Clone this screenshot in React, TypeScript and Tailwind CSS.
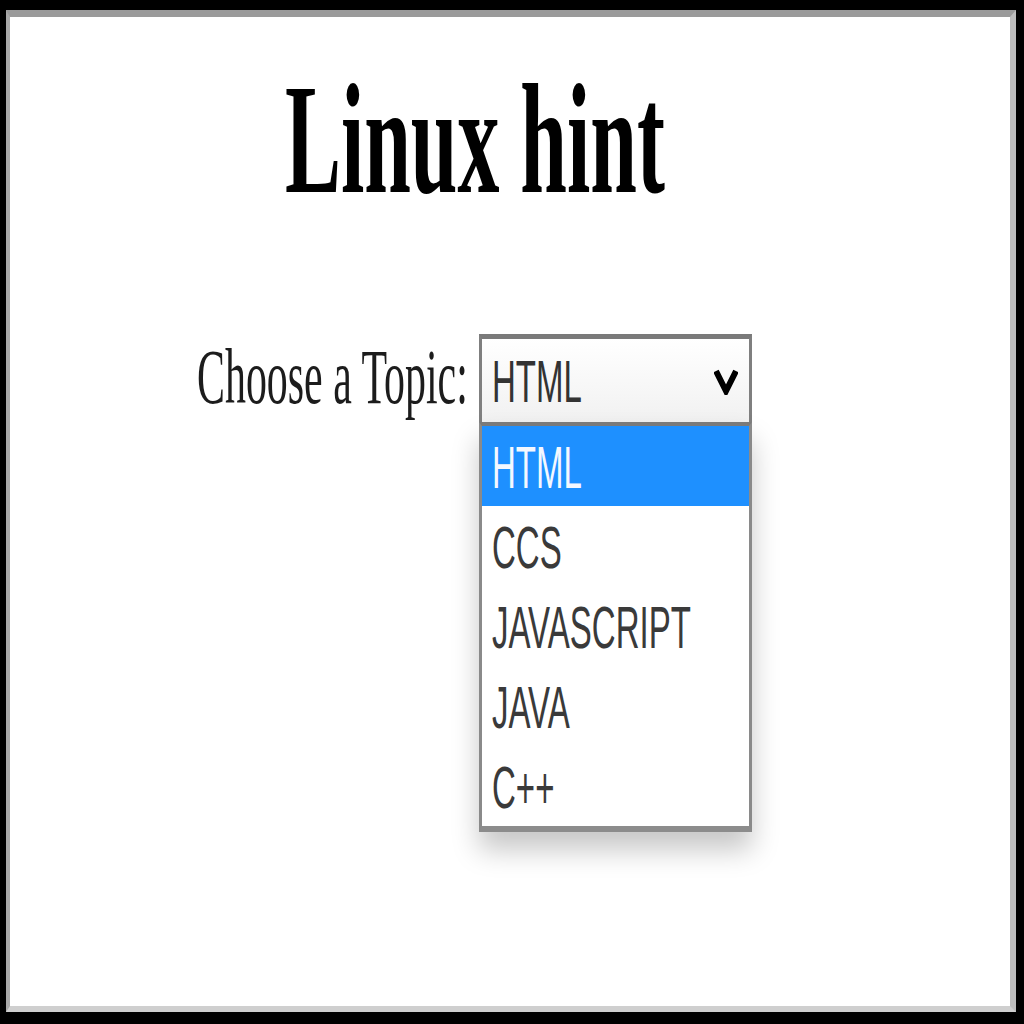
import React from "react";

const options = ["HTML", "CCS", "JAVASCRIPT", "JAVA", "C++"];

export default function App() {
  return (
    <div className="w-[1024px] h-[1024px] bg-black pt-[10px] pl-[6px] pr-[8px] pb-[12px] overflow-hidden">
      <div className="w-full h-full bg-white border-t-[7px] border-t-[#9a9a9a] border-l-[4px] border-l-[#a8a8a8] border-r-[6px] border-r-[#bdbdbd] border-b-[6px] border-b-[#cfcfcf] overflow-hidden">
        <div className="flex flex-col items-center pr-[71px] pt-[44px]">
          <div className="w-[380px] h-[157px] whitespace-nowrap">
            <span className="inline-block origin-left scale-x-[0.534] font-['Liberation_Serif',serif] font-bold text-[157px] leading-none text-black">
              Linux hint
            </span>
          </div>
          <div className="flex items-start gap-[12px] mt-[116px]">
            <div className="w-[270px] whitespace-nowrap mt-[4px]">
              <span className="inline-block origin-left scale-x-[0.537] font-['Liberation_Serif',serif] text-[78px] leading-none text-[#1c1c1c]">
                Choose a Topic:
              </span>
            </div>
            <div className="relative w-[273px]">
              <div className="h-[88px] flex justify-between bg-gradient-to-b from-white to-[#f1f1f1] border-t-[5px] border-t-[#7a7a7a] border-l-[3px] border-l-[#7f7f7f] border-r-[3px] border-r-[#7f7f7f] pl-[10px] pr-[11px]">
                <div className="pt-[14px] whitespace-nowrap w-[120px]">
                  <span className="inline-block origin-left scale-x-[0.56] font-['Liberation_Sans',sans-serif] text-[59px] leading-none text-[#333]">
                    HTML
                  </span>
                </div>
                <svg className="self-center" width="24" height="28" viewBox="0 0 24 28">
                  <polyline points="2,4 12,24 22,4" fill="none" stroke="#000" strokeWidth="6" />
                </svg>
              </div>
              <div className="absolute left-0 top-full w-[273px] bg-white border-t-[4px] border-t-[#7a7a7a] border-l-[3px] border-l-[#8a8a8a] border-r-[3px] border-r-[#8a8a8a] border-b-[6px] border-b-[#8c8c8c] shadow-[0_18px_26px_rgba(0,0,0,0.22)]">
                {options.map((o, i) => (
                  <div
                    key={o}
                    className={
                      i === 0
                        ? "h-[80px] pt-[13px] pl-[10px] whitespace-nowrap bg-[#1e90ff]"
                        : "h-[80px] pt-[13px] pl-[10px] whitespace-nowrap bg-white"
                    }
                  >
                    <span
                      className={
                        i === 0
                          ? "inline-block origin-left scale-x-[0.56] font-['Liberation_Sans',sans-serif] text-[59px] leading-none text-[#f4f8ff]"
                          : "inline-block origin-left scale-x-[0.56] font-['Liberation_Sans',sans-serif] text-[59px] leading-none text-[#3a3a3a]"
                      }
                    >
                      {o}
                    </span>
                  </div>
                ))}
              </div>
            </div>
          </div>
        </div>
      </div>
    </div>
  );
}
